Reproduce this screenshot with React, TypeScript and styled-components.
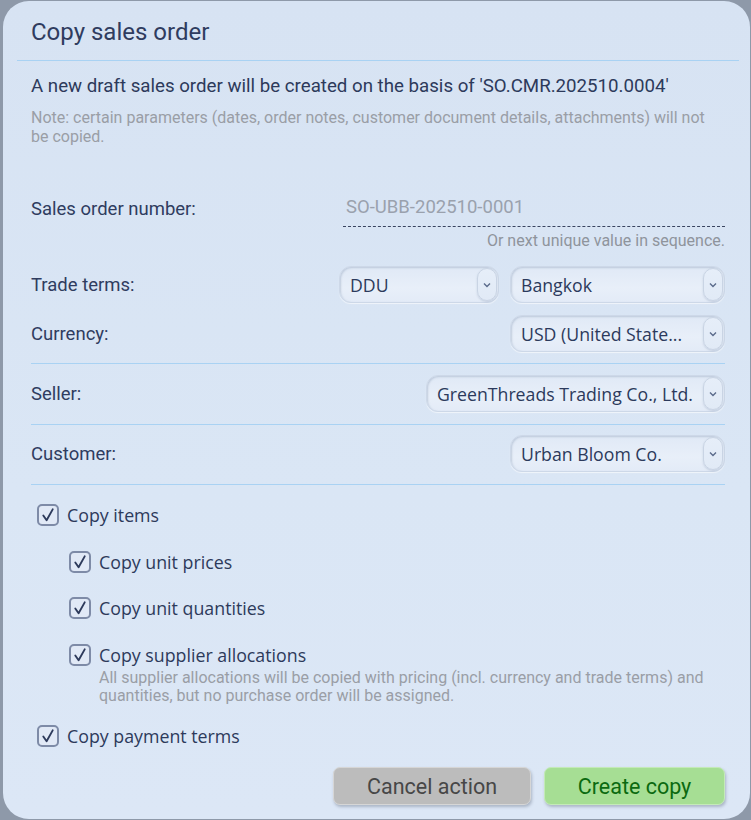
import React from "react";
import styled, { createGlobalStyle } from "styled-components";

const Global = createGlobalStyle`
  html, body { margin: 0; padding: 0; background: #8e99a9; }
  body { font-family: Roboto, "Liberation Sans", sans-serif; }
  * { box-sizing: border-box; }
`;

const Page = styled.div`
  width: 751px;
  height: 820px;
  padding: 1px 1px 1px 3px;
  display: flex;
`;

const Dialog = styled.div`
  flex: 1;
  background: linear-gradient(180deg, #d7e3f3 0%, #dae6f5 60%, #dce7f6 100%);
  border-radius: 26px;
  display: flex;
  flex-direction: column;
  padding: 0 11px 0 14px;
  color: #2d3a5b;
`;

const Header = styled.div`
  height: 59px;
  display: flex;
  align-items: center;
  padding-left: 14px;
  padding-top: 2px;
  font-size: 24px;
  color: #2f3c5f;
`;

const Rule = styled.div<{ $mt?: number }>`
  height: 1px;
  background: #a9d2f3;
  margin-top: ${(p) => p.$mt ?? 0}px;
`;

const Body = styled.div`
  padding: 0 14px 0 14px;
  display: flex;
  flex-direction: column;
`;

const Lead = styled.p`
  margin: 15px 0 0 0;
  font-size: 18.7px;
  line-height: 20px;
  color: #2d3a5b;
`;

const Note = styled.p`
  margin: 12px 0 0 0;
  font-size: 16px;
  line-height: 19px;
  color: #9a9ea6;
`;

const Row = styled.div<{ $mt?: number }>`
  display: flex;
  align-items: center;
  justify-content: space-between;
  margin-top: ${(p) => p.$mt ?? 0}px;
  min-height: 37px;
`;

const Label = styled.span`
  font-size: 18.5px;
  color: #2f3c5f;
`;

const Controls = styled.div`
  display: flex;
  gap: 11px;
  align-items: center;
`;

const NumberField = styled.div`
  width: 382px;
  height: 36px;
  border-bottom: 1.5px dashed #3a4560;
  display: flex;
  align-items: center;
  padding: 0 0 2px 3px;
  font-size: 18.5px;
  color: #9aa1ad;
`;

const Hint = styled.div`
  text-align: right;
  font-size: 16px;
  line-height: 16px;
  color: #8f949c;
  margin-top: 6px;
`;

const SelectBox = styled.div<{ $w: number }>`
  width: ${(p) => p.$w}px;
  height: 37px;
  border-radius: 12px;
  background: linear-gradient(180deg, #e0e9f6 0%, #e8eff9 60%, #e3ebf7 100%);
  border: 1px solid #cdd8e8;
  box-shadow: inset 1px 1px 2px rgba(120, 140, 170, 0.35), 0 1px 1px rgba(255,255,255,0.6);
  display: flex;
  align-items: center;
  justify-content: space-between;
  padding: 1px 1px 1px 10px;
`;

const SelectText = styled.span`
  font-family: "Open Sans", "Noto Sans", sans-serif;
  font-size: 17.7px;
  color: #2c3a5c;
  white-space: nowrap;
`;

const ArrowPill = styled.div`
  width: 20px;
  height: 33px;
  border-radius: 10px;
  border: 1px solid #c9d4e4;
  background: linear-gradient(180deg, #e6eef9, #e1eaf6);
  box-shadow: 0 1px 2px rgba(120, 140, 170, 0.3);
  display: flex;
  align-items: center;
  justify-content: center;
  flex: none;
`;

const Select = ({ w, value }: { w: number; value: string }) => (
  <SelectBox $w={w}>
    <SelectText>{value}</SelectText>
    <ArrowPill>
      <svg width="8" height="6" viewBox="0 0 8 6">
        <path d="M1 1.5 L4 4.5 L7 1.5" fill="none" stroke="#5b6b8c" strokeWidth="1.4" />
      </svg>
    </ArrowPill>
  </SelectBox>
);

const Checks = styled.div`
  display: flex;
  flex-direction: column;
  margin-top: 18px;
  padding-left: 6px;
`;

const CheckRow = styled.div<{ $indent?: boolean; $mt?: number }>`
  display: flex;
  align-items: flex-start;
  gap: 8px;
  margin-left: ${(p) => (p.$indent ? 32 : 0)}px;
  margin-top: ${(p) => p.$mt ?? 0}px;
`;

const Box = styled.div`
  width: 22px;
  height: 22px;
  margin-top: 1px;
  border: 2px solid #7e8ba7;
  border-radius: 5px;
  background: #e1e9f6;
  display: flex;
  align-items: center;
  justify-content: center;
  flex: none;
`;

const CheckText = styled.div`
  display: flex;
  flex-direction: column;
`;

const CheckLabel = styled.span`
  font-family: "Open Sans", "Noto Sans", sans-serif;
  font-size: 17.8px;
  line-height: 25px;
  color: #2d3a5b;
`;

const CheckDesc = styled.span`
  font-size: 16px;
  line-height: 18px;
  color: #9a9ea6;
  margin-top: 1px;
`;

const Check = ({
  label,
  desc,
  indent,
  mt,
}: {
  label: string;
  desc?: string;
  indent?: boolean;
  mt?: number;
}) => (
  <CheckRow $indent={indent} $mt={mt}>
    <Box>
      <svg width="16" height="16" viewBox="0 0 17 17">
        <path d="M3.5 9 L7 14 L13.5 2.5" fill="none" stroke="#2d3a5b" strokeWidth="2" strokeLinecap="round" strokeLinejoin="round" />
      </svg>
    </Box>
    <CheckText>
      <CheckLabel>{label}</CheckLabel>
      {desc && <CheckDesc>{desc}</CheckDesc>}
    </CheckText>
  </CheckRow>
);

const Footer = styled.div`
  display: flex;
  justify-content: flex-end;
  gap: 13px;
  margin-top: 18px;
`;

const Button = styled.button<{ $variant: "cancel" | "ok"; $w: number }>`
  width: ${(p) => p.$w}px;
  height: 38px;
  border-radius: 7px;
  border: 1px solid ${(p) => (p.$variant === "ok" ? "#c4eab8" : "#d6d6d6")};
  background: ${(p) => (p.$variant === "ok" ? "#a6de94" : "#bcbcbc")};
  color: ${(p) => (p.$variant === "ok" ? "#0b6a10" : "#474747")};
  font-family: Roboto, sans-serif;
  font-size: 21.5px;
  box-shadow: 1px 2px 3px rgba(60, 70, 90, 0.3);
  padding: 0;
`;

export default function App() {
  return (
    <>
      <Global />
      <Page>
        <Dialog>
          <Header>Copy sales order</Header>
          <Rule />
          <Body>
            <Lead>A new draft sales order will be created on the basis of 'SO.CMR.202510.0004'</Lead>
            <Note>
              Note: certain parameters (dates, order notes, customer document details, attachments) will not be copied.
            </Note>
            <Row $mt={44}>
              <Label>Sales order number:</Label>
              <NumberField>SO-UBB-202510-0001</NumberField>
            </Row>
            <Hint>Or next unique value in sequence.</Hint>
            <Row $mt={17}>
              <Label>Trade terms:</Label>
              <Controls>
                <Select w={160} value="DDU" />
                <Select w={215} value="Bangkok" />
              </Controls>
            </Row>
            <Row $mt={12}>
              <Label>Currency:</Label>
              <Select w={215} value="USD (United State..." />
            </Row>
            <Rule $mt={11} />
            <Row $mt={11}>
              <Label>Seller:</Label>
              <Select w={299} value="GreenThreads Trading Co., Ltd." />
            </Row>
            <Rule $mt={12} />
            <Row $mt={10}>
              <Label>Customer:</Label>
              <Select w={215} value="Urban Bloom Co." />
            </Row>
            <Rule $mt={12} />
            <Checks>
              <Check label="Copy items" />
              <Check indent mt={22} label="Copy unit prices" />
              <Check indent mt={21} label="Copy unit quantities" />
              <Check
                indent
                mt={22}
                label="Copy supplier allocations"
                desc="All supplier allocations will be copied with pricing (incl. currency and trade terms) and quantities, but no purchase order will be assigned."
              />
              <Check mt={19} label="Copy payment terms" />
            </Checks>
            <Footer>
              <Button $variant="cancel" $w={198}>Cancel action</Button>
              <Button $variant="ok" $w={181}>Create copy</Button>
            </Footer>
          </Body>
        </Dialog>
      </Page>
    </>
  );
}
